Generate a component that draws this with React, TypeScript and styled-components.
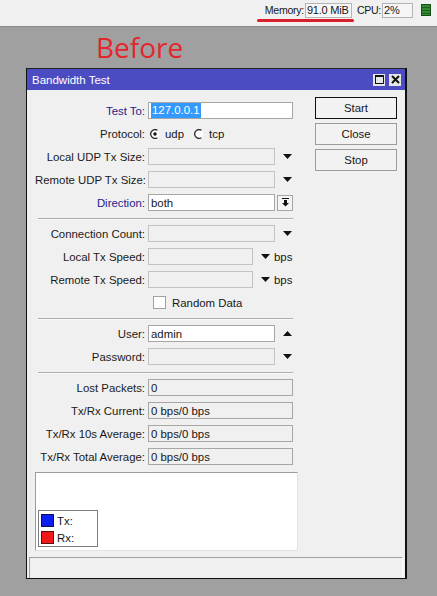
import React from 'react'
import styled, { createGlobalStyle } from 'styled-components'

const GlobalStyle = createGlobalStyle`
  * { box-sizing: border-box; }
  body {
    margin: 0;
    background: #a0a0a0;
    font-family: "Liberation Sans", Arial, sans-serif;
    font-size: 11.4px;
    color: #161616;
  }
`

type Tone = 'white' | 'off' | 'read'

function Radio({ checked }: { checked?: boolean }) {
  return (
    <svg width="10" height="10" viewBox="0 0 10 10">
      <circle cx="5" cy="5" r="4.4" fill="#fff" />
      <path d="M7.4 1.2 A4.4 4.4 0 1 0 7.4 8.8" stroke="#2a2a2a" strokeWidth="1.3" fill="none" />
      {checked && <circle cx="5" cy="5" r="1.7" fill="#111" />}
    </svg>
  )
}

function Arrow({ up }: { up?: boolean }) {
  return (
    <svg width="9" height="5" viewBox="0 0 9 5">
      <polygon points={up ? '0,5 9,5 4.5,0' : '0,0 9,0 4.5,5'} fill="#111" />
    </svg>
  )
}

function DropIcon() {
  return (
    <svg width="7" height="9" viewBox="0 0 7 9">
      <rect x="0" y="0" width="7" height="1" fill="#111" />
      <rect x="2" y="2" width="3" height="3" fill="#111" />
      <polygon points="0,5 7,5 3.5,8.5" fill="#111" />
    </svg>
  )
}

export default function App() {
  return (
    <>
      <GlobalStyle />
      <TopBar>
        <MemoryGroup>
          <BarLabel>Memory:</BarLabel>
          <BarValue $w={47}>91.0 MiB</BarValue>
        </MemoryGroup>
        <BarLabel $gap={5}>CPU:</BarLabel>
        <BarValue $w={31}>2%</BarValue>
        <CpuLed />
      </TopBar>

      <Desktop>
        <Caption>Before</Caption>
        <Window>
          <TitleBar>
            <span>Bandwidth Test</span>
            <TitleButtons>
              <TitleButton aria-label="maximize">
                <svg width="9" height="9" viewBox="0 0 9 9">
                  <rect x="0.5" y="0.5" width="8" height="8" fill="none" stroke="#111" />
                  <rect x="0" y="0" width="9" height="2" fill="#111" />
                </svg>
              </TitleButton>
              <TitleButton aria-label="close">
                <svg width="9" height="9" viewBox="0 0 9 9">
                  <path d="M1 1 L8 8 M8 1 L1 8" stroke="#111" strokeWidth="2" />
                </svg>
              </TitleButton>
            </TitleButtons>
          </TitleBar>

          <Body>
            <FormColumn>
              <Row>
                <Label $accent>Test To:</Label>
                <Cell>
                  <Field $w={145} $tone="white">
                    <Selected>127.0.0.1</Selected>
                  </Field>
                </Cell>
              </Row>
              <Row>
                <Label>Protocol:</Label>
                <Cell>
                  <RadioItem>
                    <Radio checked />
                    udp
                  </RadioItem>
                  <RadioItem>
                    <Radio />
                    tcp
                  </RadioItem>
                </Cell>
              </Row>
              <Row>
                <Label>Local UDP Tx Size:</Label>
                <Cell>
                  <Field $w={127} $tone="off" />
                  <ArrowSlot><Arrow /></ArrowSlot>
                </Cell>
              </Row>
              <Row>
                <Label>Remote UDP Tx Size:</Label>
                <Cell>
                  <Field $w={127} $tone="off" />
                  <ArrowSlot><Arrow /></ArrowSlot>
                </Cell>
              </Row>
              <Row>
                <Label $accent>Direction:</Label>
                <Cell>
                  <Field $w={127} $tone="white">both</Field>
                  <DropButton><DropIcon /></DropButton>
                </Cell>
              </Row>

              <Divider />

              <Row>
                <Label>Connection Count:</Label>
                <Cell>
                  <Field $w={127} $tone="off" />
                  <ArrowSlot><Arrow /></ArrowSlot>
                </Cell>
              </Row>
              <Row>
                <Label>Local Tx Speed:</Label>
                <Cell>
                  <Field $w={105} $tone="off" />
                  <ArrowSlot><Arrow /></ArrowSlot>
                  <Unit>bps</Unit>
                </Cell>
              </Row>
              <Row>
                <Label>Remote Tx Speed:</Label>
                <Cell>
                  <Field $w={105} $tone="off" />
                  <ArrowSlot><Arrow /></ArrowSlot>
                  <Unit>bps</Unit>
                </Cell>
              </Row>
              <Row>
                <Label />
                <Cell>
                  <CheckItem>
                    <CheckBox />
                    Random Data
                  </CheckItem>
                </Cell>
              </Row>

              <Divider />

              <Row>
                <Label>User:</Label>
                <Cell>
                  <Field $w={127} $tone="white">admin</Field>
                  <ArrowSlot><Arrow up /></ArrowSlot>
                </Cell>
              </Row>
              <Row>
                <Label>Password:</Label>
                <Cell>
                  <Field $w={127} $tone="off" />
                  <ArrowSlot><Arrow /></ArrowSlot>
                </Cell>
              </Row>

              <Divider />

              <Row>
                <Label>Lost Packets:</Label>
                <Cell><Field $w={145} $tone="read">0</Field></Cell>
              </Row>
              <Row>
                <Label>Tx/Rx Current:</Label>
                <Cell><Field $w={145} $tone="read">0 bps/0 bps</Field></Cell>
              </Row>
              <Row>
                <Label>Tx/Rx 10s Average:</Label>
                <Cell><Field $w={145} $tone="read">0 bps/0 bps</Field></Cell>
              </Row>
              <Row>
                <Label>Tx/Rx Total Average:</Label>
                <Cell><Field $w={145} $tone="read">0 bps/0 bps</Field></Cell>
              </Row>

              <Graph>
                <Legend>
                  <LegendItem>
                    <Swatch $color="#0a1ef0" $edge="#10105a" />
                    Tx:
                  </LegendItem>
                  <LegendItem>
                    <Swatch $color="#f01818" $edge="#5a1010" />
                    Rx:
                  </LegendItem>
                </Legend>
              </Graph>
            </FormColumn>

            <ButtonColumn>
              <ActionButton $primary>Start</ActionButton>
              <ActionButton>Close</ActionButton>
              <ActionButton>Stop</ActionButton>
            </ButtonColumn>
          </Body>

          <StatusBar />
        </Window>
      </Desktop>
    </>
  )
}

const TopBar = styled.div`
  height: 27px;
  background: #f0f0f0;
  border-bottom: 1px solid #8a8a8a;
  display: flex;
  justify-content: flex-end;
  align-items: center;
  padding: 0 6px 6px 0;
`

const MemoryGroup = styled.div`
  position: relative;
  display: flex;
  align-items: center;

  &::after {
    content: '';
    position: absolute;
    left: -8px;
    right: -2px;
    bottom: -4px;
    height: 3px;
    border-radius: 2px;
    background: #d8202c;
  }
`

const BarLabel = styled.span<{ $gap?: number }>`
  margin-left: ${p => p.$gap ?? 0}px;
  margin-right: 1px;
  font-size: 10.6px;
  letter-spacing: -0.3px;
`

const BarValue = styled.div<{ $w: number }>`
  width: ${p => p.$w}px;
  height: 15px;
  border: 1px solid #b4b4b4;
  background: #f6f6f6;
  display: flex;
  align-items: center;
  padding-left: 1px;
  font-size: 11px;
  letter-spacing: -0.2px;
  white-space: nowrap;
`

const CpuLed = styled.div`
  width: 10px;
  height: 12px;
  margin-left: 8px;
  background: repeating-linear-gradient(#2f8a2f 0 2px, #1d5f1d 2px 3px);
  border: 1px solid #1b4d1b;
`

const Desktop = styled.div`
  padding-left: 26px;
`

const Caption = styled.div`
  margin: 6px 0 0 70px;
  font-family: "Open Sans", "Noto Sans", sans-serif;
  font-size: 28px;
  line-height: 28px;
  color: #e3262e;
`

const Window = styled.div`
  margin-top: 7px;
  width: 381px;
  background: #f0f0f0;
  border: 1px solid #111;
  border-right-width: 2px;
  border-top-color: #222;
`

const TitleBar = styled.div`
  height: 21px;
  background: #4c4cc2;
  color: #fff;
  font-size: 11.5px;
  display: flex;
  align-items: center;
  justify-content: space-between;
  padding: 0 4px 0 5px;
`

const TitleButtons = styled.div`
  display: flex;
  gap: 4px;
`

const TitleButton = styled.div`
  width: 12px;
  height: 12px;
  background: #e6e6e6;
  display: flex;
  align-items: center;
  justify-content: center;
`

const Body = styled.div`
  display: flex;
  gap: 17px;
  padding: 7px 8px 0 8px;
`

const FormColumn = styled.div`
  width: 263px;
  padding-top: 2px;
  display: flex;
  flex-direction: column;
`

const Row = styled.div`
  height: 23px;
  display: grid;
  grid-template-columns: 110px 1fr;
  column-gap: 3px;
  align-items: center;
`

const Label = styled.div<{ $accent?: boolean }>`
  text-align: right;
  white-space: nowrap;
  color: ${p => (p.$accent ? '#23238a' : '#1a1a1a')};
`

const Cell = styled.div`
  display: flex;
  align-items: center;
`

const Field = styled.div<{ $w: number; $tone: Tone }>`
  width: ${p => p.$w}px;
  height: 17px;
  border: 1px solid ${p => (p.$tone === 'off' ? '#c2c2c2' : '#a6a6a6')};
  background: ${p => (p.$tone === 'white' ? '#fff' : '#f0f0f0')};
  padding: 0 2px;
  display: flex;
  align-items: center;
  white-space: nowrap;
`

const Selected = styled.span`
  background: #3399ff;
  color: #fff;
  padding: 1px 1px;
  line-height: 13px;
`

const ArrowSlot = styled.div`
  display: flex;
  align-items: center;
  padding-left: 8px;
`

const Unit = styled.span`
  margin-left: 4px;
`

const DropButton = styled.div`
  width: 16px;
  height: 16px;
  margin-left: 2px;
  border: 1px solid #a6a6a6;
  background: #f4f4f4;
  display: flex;
  align-items: center;
  justify-content: center;
`

const RadioItem = styled.label`
  display: flex;
  align-items: center;
  gap: 5px;
  margin-left: 2px;
  margin-right: 8px;
`

const CheckItem = styled.label`
  display: flex;
  align-items: center;
  gap: 6px;
  margin-left: 5px;
`

const CheckBox = styled.span`
  width: 13px;
  height: 13px;
  background: #fff;
  border: 1px solid #a0a0a0;
`

const Divider = styled.div`
  height: 8px;
  display: flex;
  align-items: center;
  padding-left: 3px;

  &::before {
    content: '';
    width: 255px;
    height: 1px;
    background: #acacac;
    box-shadow: 0 1px 0 #fafafa;
  }
`

const Graph = styled.div`
  margin-top: 4px;
  width: 263px;
  height: 79px;
  background: #fff;
  border-top: 1px solid #9c9c9c;
  border-left: 1px solid #9c9c9c;
  border-right: 1px solid #e2e2e2;
  border-bottom: 1px solid #e2e2e2;
  display: flex;
  flex-direction: column;
  justify-content: flex-end;
  align-items: flex-start;
  padding: 0 0 3px 2px;
`

const Legend = styled.div`
  width: 60px;
  height: 37px;
  border: 1px solid #7c7c7c;
  background: #fff;
  padding: 3px 2px 2px;
  display: flex;
  flex-direction: column;
  gap: 4px;
`

const LegendItem = styled.div`
  display: flex;
  align-items: center;
  gap: 3px;
  height: 13px;
`

const Swatch = styled.span<{ $color: string; $edge: string }>`
  width: 13px;
  height: 13px;
  background: ${p => p.$color};
  border: 1px solid ${p => p.$edge};
`

const ButtonColumn = styled.div`
  display: flex;
  flex-direction: column;
  gap: 4px;
`

const ActionButton = styled.button<{ $primary?: boolean }>`
  width: 82px;
  height: 22px;
  padding: 0;
  border: 1px solid ${p => (p.$primary ? '#111' : '#9c9c9c')};
  background: #f2f2f2;
  font: inherit;
  color: #161616;
`

const StatusBar = styled.div`
  margin: 6px 2px 0;
  height: 21px;
  background: #f0f0f0;
  border-top: 1px solid #a0a0a0;
  border-left: 1px solid #a0a0a0;
  border-right: 1px solid #fdfdfd;
`
